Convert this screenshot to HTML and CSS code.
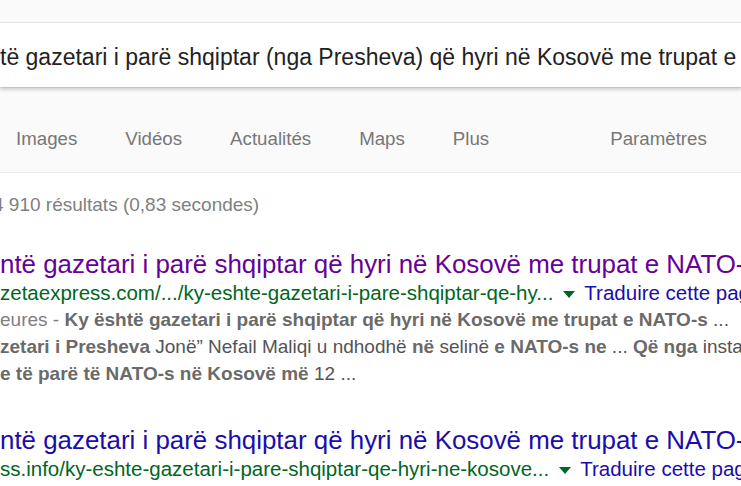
FILE: index.html
```html
<!DOCTYPE html>
<html lang="sq">
<head>
    <meta charset="UTF-8">
    <meta name="viewport" content="width=device-width, initial-scale=1.0">
    <title>Ky është gazetari i parë shqiptar - Recherche</title>
    <link rel="stylesheet" href="styles.css">
</head>
<body>
    <!-- Header: search box + tabs -->
    <div class="header">
        <div class="searchbox">
            <span class="query">të gazetari i parë shqiptar (nga Presheva) që hyri në Kosovë me trupat e NATO-s</span>
        </div>
        <div class="tabs">
            <span class="tab">Images</span>
            <span class="tab">Vidéos</span>
            <span class="tab">Actualités</span>
            <span class="tab">Maps</span>
            <span class="tab">Plus</span>
            <span class="tab settings">Paramètres</span>
        </div>
    </div>

    <!-- Results -->
    <div class="results">
        <div class="count">4 910 résultats (0,83 secondes)</div>

        <div class="result">
            <div class="title visited">ntë gazetari i parë shqiptar që hyri në Kosovë me trupat e NATO-s</div>
            <div class="url-line">
                <span class="url">zetaexpress.com/.../ky-eshte-gazetari-i-pare-shqiptar-qe-hy...</span>
                <span class="arrow"></span>
                <span class="translate">Traduire cette page</span>
            </div>
            <div class="snippet">
                <div class="line"><span class="date">eures - </span><b>Ky është gazetari i parë shqiptar që hyri në Kosovë me trupat e NATO-s</b> ...</div>
                <div class="line"><b>zetari i Presheva</b> Jonë” Nefail Maliqi u ndhodhë <b>në</b> selinë <b>e NATO-s ne</b> ... <b>Që nga</b> instalimi</div>
                <div class="line"><b>e të parë të NATO-s në Kosovë më</b> 12 ...</div>
            </div>
        </div>

        <div class="result">
            <div class="title">ntë gazetari i parë shqiptar që hyri në Kosovë me trupat e NATO-s</div>
            <div class="url-line">
                <span class="url">ss.info/ky-eshte-gazetari-i-pare-shqiptar-qe-hyri-ne-kosove...</span>
                <span class="arrow"></span>
                <span class="translate">Traduire cette page</span>
            </div>
        </div>
    </div>
</body>
</html>
```

FILE: styles.css
```css
html, body {
    margin: 0;
    overflow: hidden;
}

body {
    font-family: "Liberation Sans", Arial, sans-serif;
    background-color: #fff;
    width: 741px;
    height: 486px;
}

/* header */
.header {
    background-color: #fafafa;
    border-bottom: 1px solid #ebebeb;
    padding-top: 23px;
}

.searchbox {
    height: 60px;
    padding-top: 4px;
    background-color: #fff;
    box-shadow: 0 3px 3px 0 rgba(0,0,0,0.16), 0 0 0 1px rgba(0,0,0,0.08);
    white-space: nowrap;
    overflow: hidden;
}

.query {
    font-size: 23px;
    line-height: 60px;
    color: #222;
}

.tabs {
    display: flex;
    gap: 48px;
    padding: 39px 0 20px 16px;
    white-space: nowrap;
}

.tab {
    font-size: 18.7px;
    line-height: 26px;
    color: #777;
}

.settings {
    margin-left: 73px;
}

/* results */
.results {
    padding-top: 19px;
    white-space: nowrap;
}

.count {
    font-size: 19px;
    line-height: 26px;
    color: #808080;
    margin-left: -7px;
    margin-bottom: 31px;
}

.result {
    margin-bottom: 38px;
}

.title {
    font-size: 25.9px;
    line-height: 31px;
    color: #1a0dab;
}

.title.visited {
    color: #660099;
}

.url-line {
    display: flex;
    align-items: center;
    font-size: 20.5px;
    line-height: 26px;
}

.url {
    color: #006621;
}

.arrow {
    width: 0;
    height: 0;
    border-left: 6px solid transparent;
    border-right: 6px solid transparent;
    border-top: 7px solid #006621;
    margin: 2px 9px 0 10px;
}

.translate {
    color: #1a0dab;
}

.snippet {
    font-size: 19px;
    line-height: 27px;
    color: #545454;
}

.snippet b {
    color: #6a6a6a;
}

.date {
    color: #808080;
}
```
